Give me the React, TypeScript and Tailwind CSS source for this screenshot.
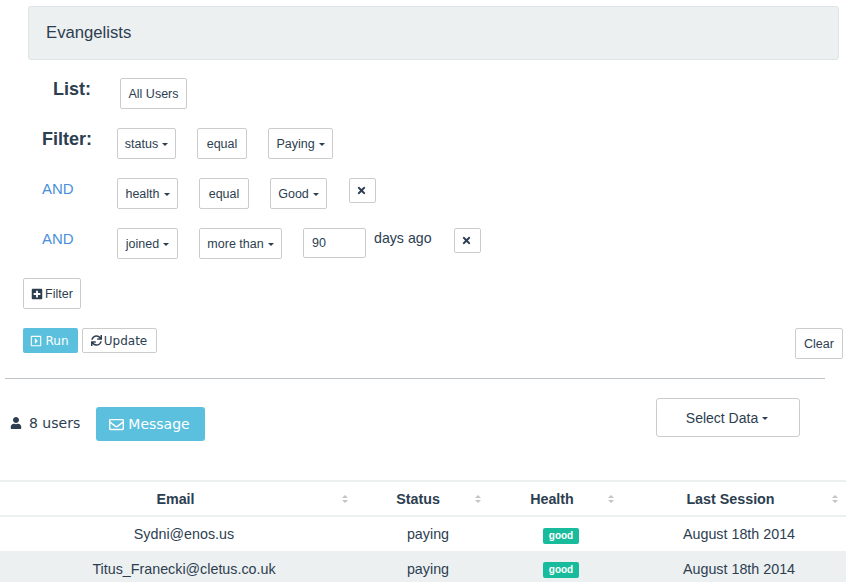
import React from "react";
import { FaPlusSquare, FaRegCaretSquareRight, FaRegEnvelope, FaSync, FaTimes, FaUser } from "react-icons/fa";

const Caret = () => (
  <span className="ml-[4px] inline-block h-0 w-0 border-x-[3px] border-t-[3px] border-x-transparent border-t-[#2c3e50] align-middle" />
);

const Sort = () => (
  <span className="absolute right-[8px] top-[13px] flex flex-col gap-[2px]">
    <span className="h-0 w-0 border-x-[3px] border-b-[3px] border-x-transparent border-b-[#c4c4c4]" />
    <span className="h-0 w-0 border-x-[3px] border-t-[3px] border-x-transparent border-t-[#c4c4c4]" />
  </span>
);

const Btn: React.FC<{ className: string; caret?: boolean; children: React.ReactNode }> = ({ className, caret, children }) => (
  <button className={`flex h-[31px] items-center justify-center rounded-[2px] border border-[#cccccc] bg-white pt-[2px] text-[12.5px] text-[#2c3e50] ${className}`}>
    {children}
    {caret && <Caret />}
  </button>
);

const CloseBtn = () => (
  <button className="flex h-[25px] w-[27px] items-center justify-center rounded-[2px] border border-[#cccccc] bg-white pr-[2px] text-[11px] text-[#2c3e50]">
    <FaTimes />
  </button>
);

const And = () => <div className="w-[75px] text-[15px] leading-[22px] text-[#4a90d9]">AND</div>;

const rows = [
  { email: "Sydni@enos.us", bg: "bg-white" },
  { email: "Titus_Franecki@cletus.co.uk", bg: "bg-[#ecf0f1]" },
];

const App: React.FC = () => {
  return (
    <div className="h-[582px] w-[846px] overflow-hidden bg-white font-['Liberation_Sans',Arial,sans-serif] text-[#2c3e50]">
      {/* Title */}
      <div className="pl-[28px] pr-[7px] pt-[6px]">
        <div className="flex h-[54px] items-center rounded-[3px] border border-[#dce4e6] bg-[#ecf0f1] pl-[17px] text-[16.7px]">
          Evangelists
        </div>
      </div>

      {/* Filters */}
      <div className="mt-[18px] flex h-[50px] items-start pl-[53px]">
        <div className="w-[67px] text-[18px] font-bold leading-[22px]">List:</div>
        <Btn className="w-[67px]">All Users</Btn>
      </div>
      <div className="flex h-[50px] items-start gap-[21px] pl-[42px]">
        <div className="-mr-[21px] w-[75px] text-[18px] font-bold leading-[22px]">Filter:</div>
        <Btn className="w-[59px]" caret>status</Btn>
        <Btn className="w-[50px]">equal</Btn>
        <Btn className="w-[65px]" caret>Paying</Btn>
      </div>
      <div className="flex h-[50px] items-start gap-[21px] pl-[42px]">
        <div className="-mr-[21px]"><And /></div>
        <Btn className="w-[61px]" caret>health</Btn>
        <Btn className="w-[50px]">equal</Btn>
        <Btn className="w-[57px]" caret>Good</Btn>
        <div className="ml-px"><CloseBtn /></div>
      </div>
      <div className="flex h-[50px] items-start gap-[21px] pl-[42px]">
        <div className="-mr-[21px]"><And /></div>
        <Btn className="w-[61px]" caret>joined</Btn>
        <Btn className="w-[83px]" caret>more than</Btn>
        <div className="flex h-[30px] w-[63px] items-center rounded-[2px] border border-[#cccccc] pl-[8px] text-[12.5px]">90</div>
        <div className="-ml-[13px] w-[59px] text-[14.2px] leading-[20px]">days ago</div>
        <CloseBtn />
      </div>
      <div className="h-[50px] pl-[23px]">
        <Btn className="w-[58px] gap-[2px]">
          <FaPlusSquare className="-mt-[2px] text-[12px]" />
          Filter
        </Btn>
      </div>

      {/* Actions */}
      <div className="flex h-[50px] items-start justify-between pl-[23px] pr-[3px]">
        <div className="flex gap-[4px] font-['DejaVu_Sans',sans-serif] text-[12px]">
          <button className="flex h-[25px] w-[55px] items-center justify-center gap-[3px] rounded-[2px] bg-[#5bc0de] pr-[2px] text-white">
            <FaRegCaretSquareRight className="text-[12px]" />
            Run
          </button>
          <button className="flex h-[25px] w-[75px] items-center justify-center gap-[2px] rounded-[2px] border border-[#cccccc] bg-white pr-px">
            <FaSync className="text-[11px]" />
            Update
          </button>
        </div>
        <Btn className="w-[48px]">Clear</Btn>
      </div>
      <div className="ml-[5px] h-px w-[820px] bg-[#bdc3c7]" />

      {/* Results toolbar */}
      <div className="mt-[19px] flex h-[82px] items-start pl-[10px]">
        <div className="mt-[15px] flex w-[86px] items-center gap-[7px] font-['DejaVu_Sans',sans-serif] text-[14px] leading-[20px]">
          <FaUser className="text-[12px]" />
          8 users
        </div>
        <button className="mt-[9px] flex h-[34px] w-[109px] items-center justify-center gap-[4px] rounded-[3px] bg-[#5bc0de] pr-[2px] font-['DejaVu_Sans',sans-serif] text-[14px] text-white">
          <FaRegEnvelope className="text-[15px]" />
          Message
        </button>
        <button className="ml-[451px] flex h-[39px] w-[144px] items-center justify-center rounded-[3px] border border-[#cccccc] bg-white pr-[2px] pt-[2px] text-[14px]">
          Select Data
          <Caret />
        </button>
      </div>

      {/* Table */}
      <table className="w-[846px] table-fixed border-collapse text-[14.3px]">
        <colgroup>
          <col className="w-[356px]" />
          <col className="w-[133px]" />
          <col className="w-[133px]" />
          <col className="w-[224px]" />
        </colgroup>
        <thead>
          <tr className="h-[35px] border-y-2 border-[#ecf0f1] font-bold">
            <th className="relative pl-[8px] pr-[13px] pt-[3px] text-center"><span>Email</span><Sort /></th>
            <th className="relative pr-[9px] pt-[3px] text-center"><span>Status</span><Sort /></th>
            <th className="relative pr-[7px] pt-[3px] text-center"><span>Health</span><Sort /></th>
            <th className="relative pr-[7px] pt-[3px] text-center"><span>Last Session</span><Sort /></th>
          </tr>
        </thead>
        <tbody>
          {rows.map((row) => (
            <tr key={row.email} className={`h-[35px] ${row.bg}`}>
              <td className="pl-[20px] pr-[8px] pt-[2px] text-center">{row.email}</td>
              <td className="pl-[11px] pt-[2px] text-center">paying</td>
              <td className="pl-[11px] pt-[2px] text-center">
                <span className="inline-block rounded-[2px] bg-[#18bc9c] px-[6px] py-[2px] align-middle text-[10px] font-bold leading-[12px] text-white">
                  good
                </span>
              </td>
              <td className="pl-[10px] pt-[2px] text-center">August 18th 2014</td>
            </tr>
          ))}
        </tbody>
      </table>
    </div>
  );
};

export default App;
